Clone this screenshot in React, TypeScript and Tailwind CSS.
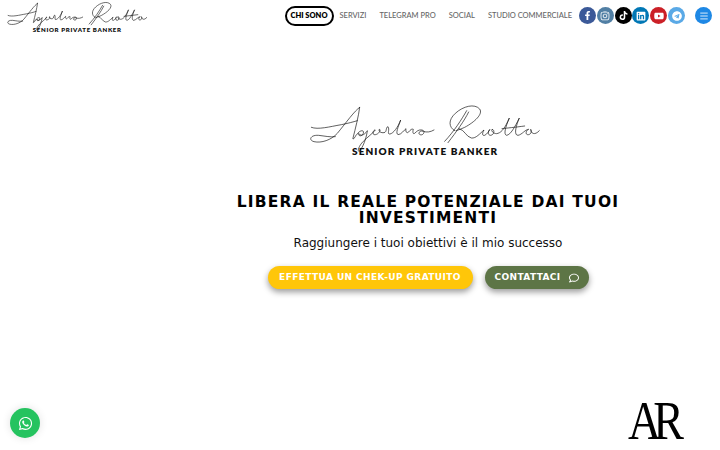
import { FaFacebookF, FaInstagram, FaTiktok, FaLinkedin, FaYoutube, FaTelegram, FaWhatsapp, FaRegComment } from "react-icons/fa";
import { Menu } from "lucide-react";

function Signature({ className, weight }: { className: string; weight: number }) {
  return (
    <svg viewBox="0 0 750 210" className={className} fill="none" stroke="#111" strokeWidth={weight} strokeLinecap="round" strokeLinejoin="round" role="img" aria-label="Agostino Ricotta">
      <path d="M40 100C60 108 95 98 130 92C150 88 165 84 178 80" />
      <path d="M185 40C170 50 145 85 118 118C100 138 70 148 48 143C30 138 38 122 62 124C80 126 95 130 112 128" />
      <path d="M185 40C182 65 172 105 165 132C163 140 170 132 174 124" />
      <path d="M176 122C184 108 200 106 196 118C192 128 180 128 182 118C190 132 205 116 208 110C206 125 200 150 186 170C178 178 178 160 196 142C210 128 222 120 232 108C226 106 220 124 232 122C244 120 250 106 244 106C240 110 248 118 258 116C268 114 262 100 270 98C276 106 266 122 276 120C286 118 300 100 308 78C300 100 292 118 300 122C310 122 318 108 324 104C322 112 326 120 332 114C338 106 342 104 346 106C344 112 344 122 350 118C356 112 362 106 372 108C384 110 376 126 366 122C358 118 366 108 376 112C386 116 398 114 408 108" />
      <path d="M470 110C452 100 450 78 472 58C496 36 530 28 545 45C556 60 530 84 500 100C492 104 482 108 474 110" />
      <path d="M506 50C490 78 468 112 440 142" />
      <path d="M512 54C498 82 476 112 450 146" />
      <path d="M484 104C500 108 504 128 520 132C534 134 546 118 558 108C552 118 552 126 560 124C568 120 572 112 576 106C570 110 568 124 578 124C590 122 590 106 582 106C578 112 590 122 600 118C612 114 622 100 634 72C622 100 616 122 626 124C638 122 650 100 664 72C652 100 648 124 660 124C672 122 682 106 692 106C684 108 680 124 692 122C700 120 702 110 698 106C698 118 710 126 724 110" />
      <path d="M612 104C628 102 650 100 680 96" />
      <text x="162" y="182" stroke="none" fill="#111" fontFamily="'Lato', 'Liberation Sans', sans-serif" fontWeight="800" fontSize="30" letterSpacing="3.3">SENIOR PRIVATE BANKER</text>
    </svg>
  );
}

const social = [
  { Icon: FaFacebookF, bg: "bg-[#3b5998]", size: 9 },
  { Icon: FaInstagram, bg: "bg-[#517fa4]", size: 10 },
  { Icon: FaTiktok, bg: "bg-[#000000]", size: 9 },
  { Icon: FaLinkedin, bg: "bg-[#0077b5]", size: 10 },
  { Icon: FaYoutube, bg: "bg-[#cb2027]", size: 10 },
  { Icon: FaTelegram, bg: "bg-[#5aa9e6]", size: 10 },
];

const links = ["SERVIZI", "TELEGRAM PRO", "SOCIAL", "STUDIO COMMERCIALE"];

export default function App() {
  return (
    <div className="h-[450px] w-[720px] overflow-hidden bg-white flex flex-col font-['Lato','Liberation_Sans',sans-serif]">
      <header className="h-[32px] flex items-start justify-between pr-[8px]">
        <Signature className="w-[152px] h-[43px] -mt-[5px] shrink-0" weight={3} />
        <div className="flex items-center h-[31px]">
          <nav className="flex items-center text-[7.5px] text-[#666] font-medium whitespace-nowrap">
            <a className="h-[20px] w-[49px] flex items-center justify-center rounded-full border-2 border-black text-black font-extrabold mr-[6px]">CHI SONO</a>
            {links.map((l) => (
              <a key={l} className="mr-[13px] last:mr-0">{l}</a>
            ))}
          </nav>
          <div className="flex items-center gap-[0.8px] ml-[7px]">
            {social.map(({ Icon, bg, size }, i) => (
              <span key={i} className={`w-[17px] h-[17px] rounded-full flex items-center justify-center text-white ${bg}`}>
                <Icon size={size} />
              </span>
            ))}
          </div>
          <span className="ml-[10px] w-[17px] h-[17px] rounded-full bg-[#1e88e5] flex items-center justify-center text-white">
            <Menu size={10} />
          </span>
        </div>
      </header>

      <main className="flex flex-col items-center pl-[136px] pt-[62px] font-['DejaVu_Sans',sans-serif]">
        <Signature className="w-[250px] h-[70px] shrink-0 mr-[10px]" weight={2} />
        <h1 className="mt-[30px] w-[400px] text-center text-[15.5px] leading-[16px] font-bold tracking-[1.2px] text-black">
          LIBERA IL REALE POTENZIALE DAI TUOI INVESTIMENTI
        </h1>
        <p className="mt-[8px] text-[12px] leading-[18px] text-[#111]">Raggiungere i tuoi obiettivi è il mio successo</p>
        <div className="mt-[14px] flex items-center gap-[12px]">
          <a className="h-[23px] w-[205px] rounded-full bg-[#ffc609] flex items-center justify-center text-white text-[9px] font-bold tracking-[0.4px] shadow-[0_3px_6px_rgba(0,0,0,0.4)] whitespace-nowrap">EFFETTUA UN CHEK-UP GRATUITO</a>
          <a className="h-[23px] w-[104px] rounded-full bg-[#5d7546] flex items-center justify-center gap-[8px] text-white text-[9px] font-bold tracking-[0.4px] shadow-[0_3px_6px_rgba(0,0,0,0.4)] whitespace-nowrap">
            CONTATTACI <FaRegComment size={10} />
          </a>
        </div>
      </main>

      <footer className="mt-auto flex items-end justify-between pl-[10px] pr-[36px] pb-[5px]">
        <span className="mb-[7px] w-[30px] h-[30px] rounded-full bg-[#25c35f] flex items-center justify-center text-white shadow-[0_0_8px_rgba(0,0,0,0.12)]">
          <FaWhatsapp size={15} />
        </span>
        <span className="font-['Liberation_Serif',serif] text-[46px] leading-[40px] tracking-[-8px] text-black pr-[8px] scale-y-[1.2] origin-bottom">AR</span>
      </footer>
    </div>
  );
}
